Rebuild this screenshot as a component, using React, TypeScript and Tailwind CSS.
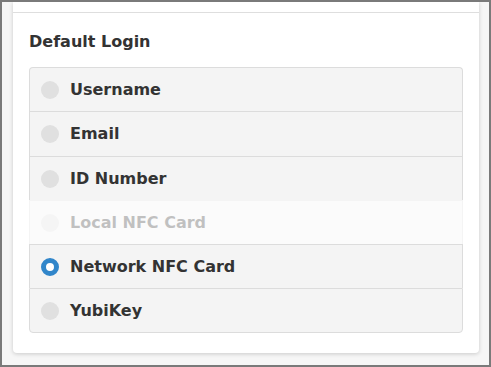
import React from "react";

const options = [
  { label: "Username", disabled: false },
  { label: "Email", disabled: false },
  { label: "ID Number", disabled: false },
  { label: "Local NFC Card", disabled: true },
  { label: "Network NFC Card", disabled: false },
  { label: "YubiKey", disabled: false },
];

export default function App() {
  const selected = "Network NFC Card";

  return (
    <div
      className="w-[491px] h-[367px] overflow-hidden border-2 border-[#7a7a7a] bg-[#f6f6f6] px-[11px] text-[#333]"
      style={{ fontFamily: '"DejaVu Sans", "Liberation Sans", sans-serif' }}
    >
      {/* Card */}
      <div className="bg-white rounded-b-[4px] shadow-[0_1px_4px_rgba(0,0,0,0.18)] w-[466px]">
        {/* Previous section (cut off) */}
        <div className="h-[11px] border-b border-[#dedede]"></div>

        {/* Default Login section */}
        <div className="px-4 pt-[17px] pb-5">
          <h2 className="text-[16px] leading-[24px] font-bold mb-[13px]">
            Default Login
          </h2>

          <div className="flex flex-col">
            {options.map((opt, i) => {
              const isSelected = opt.label === selected;
              const first = i === 0;
              const last = i === options.length - 1;
              return (
                <div
                  key={opt.label}
                  className={
                    "flex items-center gap-[11px] pl-[11px] border-x border-[#dcdcdc] bg-[#f4f4f4] " +
                    (first ? "h-[44px] border-t rounded-t-[4px] " : i === 1 ? "h-[45px] border-t " : "h-[44px] border-t ") +
                    (last ? "border-b rounded-b-[4px] h-[45px] " : "") +
                    (opt.disabled ? "opacity-30" : "")
                  }
                >
                  {isSelected ? (
                    <span className="w-[18px] h-[18px] rounded-full border-[5px] border-[#3186ca] bg-white"></span>
                  ) : (
                    <span className="w-[18px] h-[18px] rounded-full bg-[#e0e0e0]"></span>
                  )}
                  <span className="text-[16px] font-bold leading-none">
                    {opt.label}
                  </span>
                </div>
              );
            })}
          </div>
        </div>
      </div>
    </div>
  );
}
